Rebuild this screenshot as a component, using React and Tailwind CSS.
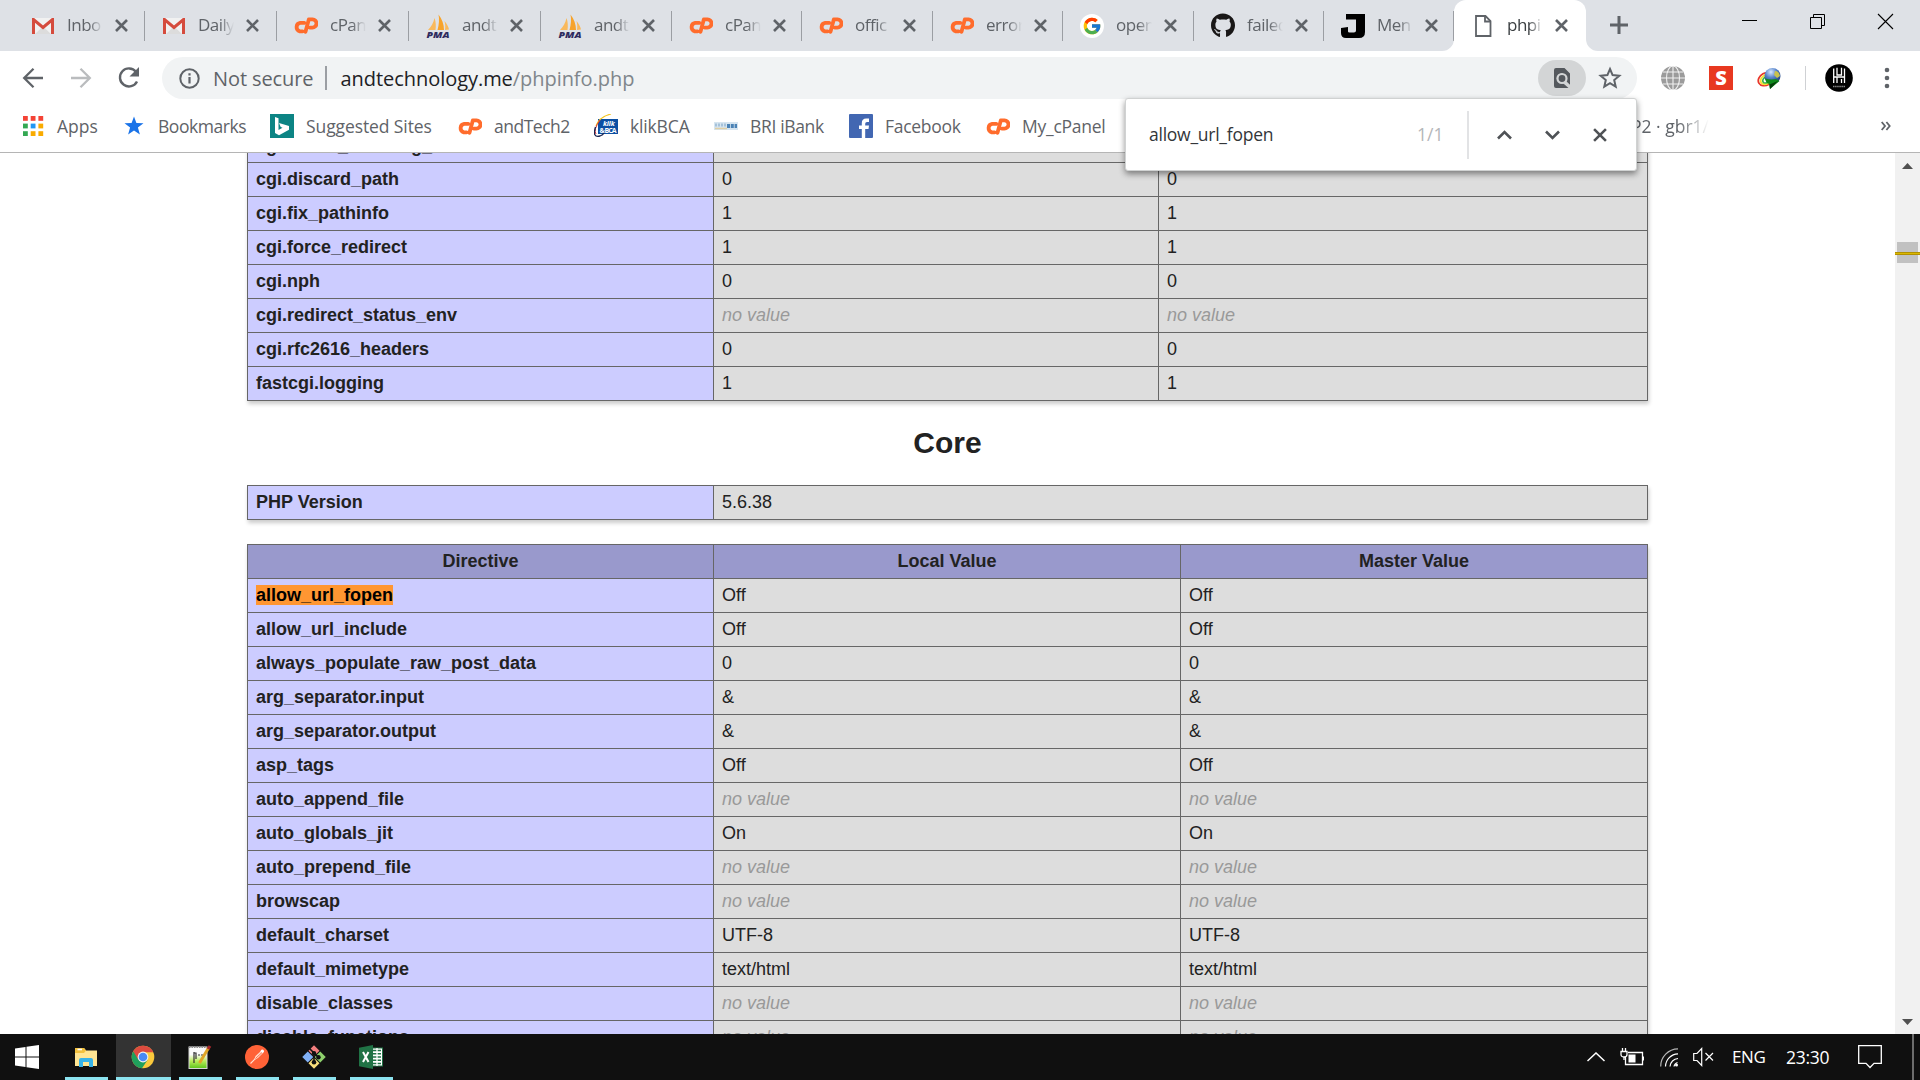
import React from "react";
import { FcGoogle } from "react-icons/fc";
import { FaGithub } from "react-icons/fa";

const Gmail = () => (
  <svg width="22" height="16" viewBox="0 0 22 16">
    <rect x="0" y="0" width="22" height="16" rx="1.2" fill="#f1f1f1" />
    <path d="M3 16 L11 8.5 L19 16Z" fill="#dcdcdc" />
    <path d="M1.5 16V1.5L11 9.5L20.5 1.5V16" fill="none" stroke="#d54b3d" strokeWidth="3" />
  </svg>
);

const CPanel = () => (
  <svg width="24" height="17" viewBox="0 0 24 17" fill="none" stroke="#ff6c2c" strokeWidth="3.800" strokeLinecap="round" strokeLinejoin="round">
    <path d="M10.300 5.900H6.200A4.300 4.300 0 0 0 5.800 14.300H8.600" />
    <path d="M11.500 14.800L14.800 2.400H18.500A3.900 3.900 0 0 1 18.300 10.600H15.800" />
  </svg>
);

const Pma = () => (
  <svg width="24" height="24" viewBox="0 0 24 24">
    <path d="M12.5 0.5C16 5 18 10 18 16H11.5C13 11 13.5 5 12.5 0.5Z" fill="#f7a32b" />
    <path d="M8.5 4C10 8 10 12 9.5 16H2C5 13 7.500 9 8.500 4Z" fill="#f9b95c" />
    <path d="M18.500 7C21 10 22.500 13 23 15.500L19 16C19.500 13 19.300 10 18.500 7Z" fill="#f9b95c" />
    <text x="0.5" y="23.500" fontSize="9" fontWeight="900" fontStyle="italic" fontFamily="Open Sans, sans-serif" fill="#2f2b5e" textLength="23" lengthAdjust="spacingAndGlyphs">PMA</text>
  </svg>
);

const Google = () => (
  <span className="flex size-6 items-center justify-center rounded-full bg-white">
    <FcGoogle size={20} />
  </span>
);

const GitHub = () => <FaGithub size={25} color="#191717" />;

const JLogo = () => (
  <svg width="24" height="24" viewBox="0 0 24 24">
    <path d="M5 0H24V18Q24 24 18 24H5Q0 24 0 19V14L7 13V17.500Q7 18.500 8.500 18.500H13Q15 18.500 15 16.500V5.500H5Z" fill="#000" />
  </svg>
);

const PageIcon = () => (
  <svg width="24" height="24" viewBox="0 0 24 24" fill="none" stroke="#5f6368" strokeWidth="1.800">
    <path d="M5 2H14.500L19.500 7V22H5Z" />
    <path d="M14 2V7.500H19.500" />
  </svg>
);

const Cross = ({ size = 13, color = "#5f6368", w = 2.600 }) => (
  <svg width={size} height={size} viewBox="0 0 13 13">
    <path d="M1 1L12 12M12 1L1 12" stroke={color} strokeWidth={w} />
  </svg>
);

const tabs = [
  [Gmail, "Inbo", "w-[131px]"],
  [Gmail, "Daily", "w-[132px]"],
  [CPanel, "cPan", "w-[132px]"],
  [Pma, "andt", "w-[132px]"],
  [Pma, "andt", "w-[131px]"],
  [CPanel, "cPan", "w-[130px]"],
  [CPanel, "offic", "w-[131px]"],
  [CPanel, "error", "w-[130px]"],
  [Google, "open", "w-[131px]"],
  [GitHub, "failed", "w-[130px]"],
  [JLogo, "Men", "w-[130px]"],
];

function Tab({ Icon, label, active, width }) {
  return (
    <div className={"flex h-[51px] shrink-0 items-center " + width}>
      <span className="ml-[17px] flex w-6 shrink-0 items-center justify-center">
        <Icon />
      </span>
      <span
        className={
          "-mt-px ml-[12px] w-[36px] shrink-0 overflow-hidden whitespace-nowrap text-[17px] leading-6 tracking-[-0.500px] [mask-image:linear-gradient(to_right,#000_60%,transparent)] " +
          (active ? "text-[#3c4043]" : "text-[#5f6368]")
        }
      >
        {label}
      </span>
      <span className="ml-[12px] shrink-0">
        <Cross />
      </span>
      {!active && <span className="ml-auto h-[30px] w-[1.500px] shrink-0 bg-[#9b9ea3]" />}
    </div>
  );
}

function TabStrip() {
  return (
    <div className="flex h-[51px] bg-[#dee1e6] pl-[14px]">
      <div className="flex w-[1440px] shrink-0">
        {tabs.map(([Icon, label, width], i) => (
          <Tab key={i} Icon={Icon} label={label} width={width} />
        ))}
      </div>
      <div className="relative h-[51px] w-[132px] shrink-0 rounded-t-[12px] bg-white">
        <svg className="absolute bottom-0 -left-3" width="12" height="12">
          <path d="M12 0V12H0A12 12 0 0 0 12 0Z" fill="#fff" />
        </svg>
        <svg className="absolute -right-3 bottom-0" width="12" height="12">
          <path d="M0 0V12H12A12 12 0 0 1 0 0Z" fill="#fff" />
        </svg>
        <Tab Icon={PageIcon} label="phpi" active width="w-[131px]" />
      </div>
      <svg className="mt-4 ml-[24px]" width="18" height="18">
        <path d="M0 9H18M9 0V18" stroke="#5f6368" strokeWidth="3" />
      </svg>
      <div className="mt-[13px] ml-auto mr-[26px] flex gap-[51px]">
        <svg width="17" height="17"><path d="M1 7.500H16" stroke="#000" /></svg>
        <svg width="17" height="17" fill="none" stroke="#000">
          <path d="M1.500 4.500H12.500V15.500H1.500ZM4.500 4.500V1.500H15.500V12.500H12.500" />
        </svg>
        <svg width="17" height="17"><path d="M1 1L16 16M16 1L1 16" stroke="#000" strokeWidth="1.100" /></svg>
      </div>
    </div>
  );
}

function Toolbar() {
  return (
    <div className="flex h-[54px] items-center bg-white">
      <div className="flex w-[162px] items-center pl-[22px]">
        <svg width="22" height="22" fill="none" stroke="#5f6368" strokeWidth="2.300">
          <path d="M21 11H2.500M11.500 1.700L2.200 11L11.500 20.300" />
        </svg>
        <svg className="ml-[27px]" width="22" height="22" fill="none" stroke="#babcbe" strokeWidth="2.300">
          <path d="M0 11H18.500M9.500 1.700L18.800 11L9.500 20.300" />
        </svg>
        <svg className="ml-[25px]" width="22" height="22">
          <path d="M18 4.800A9 9 0 1 0 19 14.500" fill="none" stroke="#5f6368" strokeWidth="2.400" />
          <path d="M21 0V9.500H11.500Z" fill="#5f6368" />
        </svg>
      </div>
      <div className="flex h-[42px] w-[1475px] items-center rounded-full bg-[#f1f3f4] pl-[17px]">
        <svg width="21" height="21" fill="none" stroke="#5f6368" strokeWidth="2">
          <circle cx="10.500" cy="10.500" r="9.200" />
          <path d="M10.500 9V15.500M10.500 5.200V7.500" strokeWidth="2.200" />
        </svg>
        <span className="mt-[2px] ml-[13px] w-[102px] whitespace-nowrap text-[20px] tracking-[-0.100px] text-[#5f6368]">Not secure</span>
        <span className="ml-[10px] h-6 w-[1.500px] bg-[#9b9ea3]" />
        <span className="mt-[2px] ml-[14px] whitespace-nowrap text-[20px] tracking-[-0.050px] text-[#202124]">
          andtechnology.me<span className="text-[#80868b]">/phpinfo.php</span>
        </span>
        <span className="mr-[3px] ml-auto flex h-9 w-12 items-center justify-center rounded-full bg-[#d3d5d6]">
          <svg width="18" height="22" viewBox="0 0 18 22">
            <path d="M3 1H11.500L17 6.500V18L12.500 13.900A4.800 4.800 0 1 0 9.800 15.900L15.500 21H3Q1 21 1 19V3Q1 1 3 1Z" fill="#54585d" />
            <circle cx="9" cy="11.500" r="4.500" fill="#54585d" stroke="#d3d5d6" strokeWidth="2.200" />
            <path d="M12 14.500L17 19.500" stroke="#d3d5d6" strokeWidth="2.200" />
          </svg>
        </span>
        <svg className="mr-[15px] ml-[9px]" width="24" height="24" viewBox="0 0 24 24">
          <path d="M12 3L14.600 9.100L21.300 9.700L16.200 14L17.700 20.600L12 17.100L6.300 20.600L7.800 14L2.700 9.700L9.400 9.100Z" fill="none" stroke="#5f6368" strokeWidth="2" />
        </svg>
      </div>
      <svg className="ml-6" width="24" height="24" viewBox="0 0 24 24">
        <circle cx="12" cy="12" r="12" fill="#9b9b9b" />
        <g fill="none" stroke="#fff" strokeWidth="1.100" opacity=".85">
          <path d="M0 12H24M2 6H22M2 18H22M12 0V24" />
          <ellipse cx="12" cy="12" rx="6.500" ry="12" />
        </g>
      </svg>
      <span className="ml-6 flex size-6 items-center justify-center bg-[#e83820] font-['Open_Sans',sans-serif] text-[20px] leading-none font-extrabold text-white">S</span>
      <svg className="ml-6" width="24" height="24" viewBox="0 0 24 24">
        <defs>
          <radialGradient id="idm" cx=".4" cy=".25" r=".7">
            <stop offset="0" stopColor="#d8e9ff" />
            <stop offset=".5" stopColor="#5a86cc" />
            <stop offset="1" stopColor="#1f4382" />
          </radialGradient>
        </defs>
        <g fill="none" strokeWidth="1.800">
          <ellipse cx="9" cy="13" rx="8.200" ry="6" stroke="#e8362a" transform="rotate(-30 9 13)" />
          <ellipse cx="9.500" cy="13.500" rx="6.500" ry="4.500" stroke="#f6e02d" transform="rotate(-30 9 13)" />
          <ellipse cx="10" cy="14" rx="5" ry="3" stroke="#38b34a" transform="rotate(-30 9 13)" />
        </g>
        <circle cx="15.500" cy="10" r="8" fill="url(#idm)" />
        <path d="M18 5Q22 5 23 10L20 12L17 9Z" fill="#c8c24e" />
        <path d="M8 12.500Q14 14 19 13L22.500 15L13 23L12 18Q9 17 8 12.500Z" fill="#0e8a1b" />
        <path d="M13 23L12.500 18.500L21 15Z" fill="#053f0a" />
      </svg>
      <span className="ml-6 h-6 w-px bg-[#cfd1d4]" />
      <svg className="ml-[19px]" width="28" height="28" viewBox="0 0 28 28">
        <circle cx="14" cy="14" r="13.800" fill="#000" />
        <path d="M8.700 4.500V19M12 3.800V11H16.500V3.800M19.500 4.500V19M8.700 13H19.500M12 19V13M16.500 19V15" fill="none" stroke="#fff" strokeWidth="1.300" />
        <path d="M8 22.500H20" stroke="#888" strokeWidth="1.300" strokeDasharray="1.500 .6" />
      </svg>
      <svg className="ml-[31px]" width="6" height="22">
        <g fill="#5f6368">
          <circle cx="3" cy="3" r="2.300" /><circle cx="3" cy="11" r="2.300" /><circle cx="3" cy="19" r="2.300" />
        </g>
      </svg>
    </div>
  );
}

const AppsIcon = () => (
  <svg width="24" height="24" viewBox="0 0 24 24">
    {["#f44336", "#f44336", "#f44336", "#34a853", "#2196f3", "#f9ab00", "#34a853", "#f9ab00", "#f9ab00"].map((c, i) => (
      <rect key={i} x={2 + (i % 3) * 7.700} y={2 + Math.floor(i / 3) * 7.600} width="4.800" height="4.800" fill={c} />
    ))}
  </svg>
);
const StarIcon = () => (
  <svg width="24" height="24" viewBox="0 0 24 24">
    <path d="M12 2.500L14.400 9.100L21.500 9.300L15.900 13.600L17.900 20.500L12 16.500L6.100 20.500L8.100 13.600L2.500 9.300L9.600 9.100Z" fill="#1a73e8" />
  </svg>
);
const BingIcon = () => (
  <svg width="24" height="24" viewBox="0 0 24 24">
    <rect width="24" height="24" fill="#0c8484" />
    <path d="M5 3L8.500 4.200V16L12.500 13.800L10.700 13L9 9L19 12V15.800L9 21.300L5 19Z" fill="#fff" />
  </svg>
);
const KlikBca = () => (
  <svg width="24" height="24" viewBox="0 0 24 24">
    <rect x="4" y="5" width="20" height="15" fill="#0b4fa3" />
    <text x="9" y="12" fontSize="7" fontWeight="bold" fontStyle="italic" fontFamily="Open Sans, sans-serif" fill="#fff">klik</text>
    <text x="5.500" y="18.500" fontSize="7" fontWeight="bold" fontFamily="Open Sans, sans-serif" fill="#fff" textLength="17">&amp; BCA</text>
    <path d="M17 0Q5 3 2 12" fill="none" stroke="#f5c51f" strokeWidth="1.200" />
    <path d="M6 6Q-1 16 2 20" fill="none" stroke="#d8343a" strokeWidth="1" />
    <path d="M1.500 13Q-2 24 6 22Q9 21 10 19" fill="none" stroke="#1a2450" strokeWidth="1.300" />
  </svg>
);
const BriIcon = () => (
  <svg width="24" height="24" viewBox="0 0 24 24">
    <rect y="8" width="24" height="8" fill="#d6e5f0" />
    <path d="M1 11H12" stroke="#a5c2da" strokeWidth="3" strokeDasharray="2 1" />
    <path d="M1 14.500H13" stroke="#dfcfa5" strokeWidth="1.500" />
    <path d="M13 12H23" stroke="#4a82b5" strokeWidth="4" strokeDasharray="3 .8" />
  </svg>
);
const FacebookIcon = () => (
  <svg width="24" height="24" viewBox="0 0 24 24">
    <rect width="24" height="24" rx="1" fill="#4267b2" />
    <path d="M12.800 24V15H10V11.500H12.800V9Q12.800 4.500 17.300 4.500H20V8H18Q16.200 8 16.200 9.700V11.500H20L19.500 15H16.200V24Z" fill="#fff" />
  </svg>
);

function Bookmark({ Icon, label, className }) {
  return (
    <div className={"flex shrink-0 items-center gap-3 whitespace-nowrap " + className}>
      <Icon />
      <span>{label}</span>
    </div>
  );
}

function BookmarksBar() {
  return (
    <div className="flex h-[47px] items-center bg-white pb-[5px] pl-[21px] text-[17.500px] text-[#5f6368]">
      <Bookmark Icon={AppsIcon} label="Apps" className="w-[101px]" />
      <Bookmark Icon={StarIcon} label="Bookmarks" className="w-[148px] tracking-[-0.450px]" />
      <Bookmark Icon={BingIcon} label="Suggested Sites" className="w-[188px] tracking-[-0.100px]" />
      <Bookmark Icon={CPanel} label="andTech2" className="w-[136px] tracking-[-0.500px]" />
      <Bookmark Icon={KlikBca} label="klikBCA" className="w-[120px] tracking-[-0.150px]" />
      <Bookmark Icon={BriIcon} label="BRI iBank" className="w-[135px] tracking-[-0.350px]" />
      <Bookmark Icon={FacebookIcon} label="Facebook" className="w-[137px] tracking-[-0.300px]" />
      <Bookmark Icon={CPanel} label="My_cPanel" className="w-[645px] tracking-[-0.250px]" />
      <span className="whitespace-nowrap [mask-image:linear-gradient(to_right,#000_60%,transparent)]">P2 · gbr1/</span>
      <svg className="mr-[29px] ml-auto" width="10" height="10" fill="none" stroke="#5f6368" strokeWidth="1.800">
        <path d="M.7 1L4 5L.7 9M5.400 1L8.700 5L5.400 9" />
      </svg>
    </div>
  );
}

function FindBar() {
  return (
    <div className="absolute top-[98px] left-[1125px] flex h-[73px] w-[512px] items-center rounded-[3px] border border-[#d0d2d2] bg-white shadow-[0_3px_6px_rgba(0,0,0,0.45)]">
      <span className="ml-[23px] w-[268px] text-[17.500px] tracking-[-0.250px] text-[#333639]">allow_url_fopen</span>
      <span className="w-[50px] text-[17.500px] text-[#b4b6b9]">1/1</span>
      <span className="h-12 w-[1.500px] bg-[#e2e3e5]" />
      <svg className="ml-[28px]" width="15" height="10" fill="none" stroke="#4f5256" strokeWidth="2.600"><path d="M1 8.500L7.500 2L14 8.500" /></svg>
      <svg className="ml-[33px]" width="15" height="10" fill="none" stroke="#4f5256" strokeWidth="2.600"><path d="M1 1.500L7.500 8L14 1.500" /></svg>
      <span className="ml-[33px]"><Cross size={14} color="#4f5256" w={2.400} /></span>
    </div>
  );
}

const NV = "no value";
const cgiRows = [
  ["cgi.check_shebang_line", "1"],
  ["cgi.discard_path", "0"],
  ["cgi.fix_pathinfo", "1"],
  ["cgi.force_redirect", "1"],
  ["cgi.nph", "0"],
  ["cgi.redirect_status_env", NV],
  ["cgi.rfc2616_headers", "0"],
  ["fastcgi.logging", "1"],
];
const coreRows = [
  ["allow_url_fopen", "Off"],
  ["allow_url_include", "Off"],
  ["always_populate_raw_post_data", "0"],
  ["arg_separator.input", "&"],
  ["arg_separator.output", "&"],
  ["asp_tags", "Off"],
  ["auto_append_file", NV],
  ["auto_globals_jit", "On"],
  ["auto_prepend_file", NV],
  ["browscap", NV],
  ["default_charset", "UTF-8"],
  ["default_mimetype", "text/html"],
  ["disable_classes", NV],
  ["disable_functions", NV],
];

const tableClass =
  "w-[1401px] table-fixed border-collapse text-left text-[18px] leading-[21px] text-[#222] shadow-[1px_3px_4px_#ccc]";
const cell = "h-[34px] border border-[#666] px-2 align-middle ";

function Value({ v }) {
  return (
    <td className={cell + "bg-[#ddd]"}>
      {v === NV ? <i className="text-[#999]">{v}</i> : v}
    </td>
  );
}

function Rows({ rows, highlight, firstPad = "" }) {
  return rows.map(([name, v], i) => (
    <tr key={name}>
      <td className={cell + "bg-[#ccf] font-bold " + (i === 0 ? firstPad : "")}>
        {name === highlight ? <span className="bg-[#ff9632] text-black">{name}</span> : name}
      </td>
      <Value v={v} />
      <Value v={v} />
    </tr>
  ));
}

function PhpInfo() {
  return (
    <div className="flex h-[881px] overflow-hidden bg-white font-['Liberation_Sans',Arial,sans-serif]">
      <div className="flex w-[1895px] shrink-0 flex-col items-start pl-[247px]">
        <table className={tableClass + " -mt-[25px]"}>
          <colgroup><col className="w-[466px]" /><col className="w-[445px]" /><col /></colgroup>
          <tbody><Rows rows={cgiRows} firstPad="pt-[2px]" /></tbody>
        </table>
        <h2 className="mt-[26px] w-[1401px] text-center text-[30px] leading-[32px] font-bold text-[#222]">Core</h2>
        <table className={tableClass + " mt-[26px]"}>
          <colgroup><col className="w-[466px]" /><col /></colgroup>
          <tbody>
            <tr>
              <td className={cell + "bg-[#ccf] font-bold"}>PHP Version</td>
              <Value v="5.6.38" />
            </tr>
          </tbody>
        </table>
        <table className={tableClass + " mt-6"}>
          <colgroup><col className="w-[466px]" /><col className="w-[467px]" /><col /></colgroup>
          <tbody>
            <tr className="bg-[#99c] text-center font-bold">
              <td className={cell}>Directive</td>
              <td className={cell}>Local Value</td>
              <td className={cell}>Master Value</td>
            </tr>
            <Rows rows={coreRows} highlight="allow_url_fopen" />
          </tbody>
        </table>
      </div>
      <div className="flex w-[25px] flex-col items-center bg-[#f1f1f1]">
        <svg className="mt-[10px] shrink-0" width="11" height="6"><path d="M0 6L5.500 0L11 6Z" fill="#505050" /></svg>
        <div className="mt-[73px] flex h-[21px] w-[21px] shrink-0 flex-col bg-[#c1c1c1]">
          <span className="mt-[10px] -ml-[2px] h-[3px] w-[25px] border-y border-[#b39000] bg-[#d9b800]" />
        </div>
        <svg className="mt-auto mb-[9px] shrink-0" width="11" height="6"><path d="M0 0L5.500 6L11 0Z" fill="#505050" /></svg>
      </div>
    </div>
  );
}

const Explorer = () => (
  <svg width="24" height="24" viewBox="0 0 24 24">
    <path d="M1 3H10L12 5.500H23V21H1Z" fill="#ffe593" />
    <path d="M1 3H10L12 5.500L10 8H1Z" fill="#f2c13e" />
    <path d="M3.500 4.500H8" stroke="#fff" strokeWidth="1.600" />
    <path d="M5 22V15Q5 13 7 13H17Q19 13 19 15V22H15V17H9V22Z" fill="#37b3e8" />
  </svg>
);
const Chrome = () => (
  <svg width="24" height="24" viewBox="0 0 24 24">
    <circle cx="12" cy="12" r="11.300" fill="#fbc93c" />
    <path d="M12 12L2.200 6.350A11.300 11.300 0 0 0 11 23.260L16.700 14.700Z" fill="#1fa05c" />
    <path d="M2.200 6.350A11.300 11.300 0 0 1 22.300 7.300H12L7.300 14.700Z" fill="#dc4b3f" />
    <circle cx="12" cy="12" r="5.400" fill="#f1f1f1" />
    <circle cx="12" cy="12" r="4.300" fill="#4a8af4" />
  </svg>
);
const NotepadPP = () => (
  <svg width="24" height="24" viewBox="0 0 24 24">
    <defs>
      <linearGradient id="npp" x1="0" y1="0" x2="0" y2="1">
        <stop offset=".35" stopColor="#fafafa" />
        <stop offset=".65" stopColor="#b9ec5a" />
        <stop offset="1" stopColor="#5cc41b" />
      </linearGradient>
    </defs>
    <rect x="1" y="2" width="18" height="21.500" fill="url(#npp)" stroke="#d6d6d6" />
    <path d="M1 2H19" stroke="#8b8b8b" strokeWidth="2" strokeDasharray="1.500 1" />
    <path d="M6 7V18M6 8H8V14M10 10H12M13 10H15" stroke="#333" strokeWidth="1.200" fill="none" />
    <path d="M20.500 3L11.500 18" stroke="#e0a526" strokeWidth="3" />
    <path d="M20 4L22 1" stroke="#a8282c" strokeWidth="3" />
  </svg>
);
const Postman = () => (
  <svg width="24" height="24" viewBox="0 0 24 24">
    <circle cx="12" cy="12" r="12" fill="#ff6237" />
    <path d="M5.500 18.500L13 11" stroke="#ffe3d6" strokeWidth="1.100" />
    <path d="M9 15L10.500 11L16 6L18 8L13 13Z" fill="#ffd9ca" />
    <circle cx="17.300" cy="6.300" r="1.700" fill="#fff" />
    <path d="M10.500 13.500L17 7.500" stroke="#ff6237" strokeWidth=".9" />
  </svg>
);
const Git = () => (
  <svg width="24" height="24" viewBox="0 0 24 24">
    <g transform="rotate(45 12 12)">
      <rect x="3.700" y="3.700" width="7.800" height="7.800" fill="#f27e7e" />
      <rect x="12.500" y="3.700" width="7.800" height="7.800" fill="#8ed06c" />
      <rect x="3.700" y="12.500" width="7.800" height="7.800" fill="#82b1f7" />
      <rect x="12.500" y="12.500" width="7.800" height="7.800" fill="#fbe07c" />
    </g>
    <path d="M7 3L12 8V18M12 8L16.500 12.500" fill="none" stroke="#101010" strokeWidth="1.600" />
    <circle cx="12" cy="8.300" r="2.200" fill="#101010" /><circle cx="12" cy="17.300" r="2.300" fill="#101010" /><circle cx="16.500" cy="12.300" r="2.200" fill="#101010" />
  </svg>
);
const Excel = () => (
  <svg width="24" height="24" viewBox="0 0 24 24">
    <rect x="12" y="3" width="11.500" height="18" fill="#fff" stroke="#207245" />
    <path d="M14 5.500H22M14 8.800H22M14 12H22M14 15.200H22M14 18.500H22" stroke="#207245" strokeWidth="1.500" />
    <path d="M18 3V21" stroke="#fff" strokeWidth="1.300" />
    <path d="M0 2.700L14 0V24L0 21.300Z" fill="#207245" />
    <path d="M4 7L9.500 17M9.500 7L4 17" stroke="#fff" strokeWidth="2" />
  </svg>
);

function Taskbar() {
  return (
    <div className="flex h-[46px] bg-[#101010] text-[17px] text-white">
      <div className="flex w-[58px] items-center pl-[15px]">
        <svg width="24" height="24" viewBox="0 0 24 24" fill="#fff">
          <path d="M0 3.400L10.500 2V11.400H0ZM11.500 1.800L24 0V11.400H11.500ZM0 12.400H10.500V22L0 20.600ZM11.500 12.400H24V24L11.500 22.200Z" />
        </svg>
      </div>
      {[Explorer, Chrome, NotepadPP, Postman, Git, Excel].map((Icon, i) => (
        <div key={i} className="flex w-[57px] justify-center">
          <div className={"flex flex-col items-center justify-between pt-[11px] " + (i === 1 ? "w-[55px] bg-[#333]" : "w-[43px]")}>
            <span className="pr-px">
              <Icon />
            </span>
            <span className="h-[3px] w-full bg-[#8ce3ef]" />
          </div>
        </div>
      ))}
      <div className="ml-auto flex items-center">
        <svg width="18" height="10" fill="none" stroke="#fff" strokeWidth="1.500"><path d="M.5 9L9 1L17.500 9" /></svg>
        <svg className="ml-[15px]" width="24" height="18" fill="none" stroke="#fff" strokeWidth="1.300">
          <path d="M8 4.500H22.500V16.500H5.500V9M23.500 8.500V12.500M1 3.500H7V6.500Q7 9 4 9Q1 9 1 6.500ZM2.500 0V3M5.500 0V3" />
          <rect x="8.500" y="6.500" width="7" height="8" fill="#fff" stroke="none" />
          <path d="M4 9V12" />
        </svg>
        <svg className="ml-[16px]" width="19" height="19" fill="none" stroke="#fff" strokeWidth="1.200">
          <path d="M.7 18.500A17.500 17.500 0 0 1 18 .8" stroke="#b5b5b5" />
          <path d="M5.500 18.500A13 13 0 0 1 18 5.800M10 18.500A8.500 8.500 0 0 1 18 10.500M14 18.500A5 5 0 0 1 17.500 14.500" />
          <circle cx="16.500" cy="17" r="1.500" fill="#fff" stroke="none" />
        </svg>
        <svg className="ml-[14px]" width="21" height="20" fill="none" stroke="#fff" strokeWidth="1.200">
          <path d="M.7 6.500H4L8.700 1.500V18.500L4 13.500H.7ZM12.500 6L20 13.500M20 6L12.500 13.500" />
        </svg>
        <span className="ml-[18px] w-[35px] text-[17px] tracking-[-0.400px]">ENG</span>
        <span className="ml-[19px] w-[46px] text-[17.500px] tracking-[-0.300px]">23:30</span>
        <svg className="ml-[26px]" width="24" height="24" fill="none" stroke="#fff" strokeWidth="1.300">
          <path d="M.7 .7H23.300V18.300H16L12 22.500L8 18.300H.7Z" />
        </svg>
        <span className="ml-[30px] h-[46px] w-[2px] bg-[#6d6d6d]" />
        <span className="w-[6px]" />
      </div>
    </div>
  );
}

export default function App() {
  return (
    <div className="relative h-[1080px] w-[1920px] overflow-hidden bg-white font-['Open_Sans','Noto_Sans',sans-serif]">
      <TabStrip />
      <Toolbar />
      <BookmarksBar />
      <div className="h-px bg-[#b5b5b5]" />
      <PhpInfo />
      <Taskbar />
      <FindBar />
    </div>
  );
}
